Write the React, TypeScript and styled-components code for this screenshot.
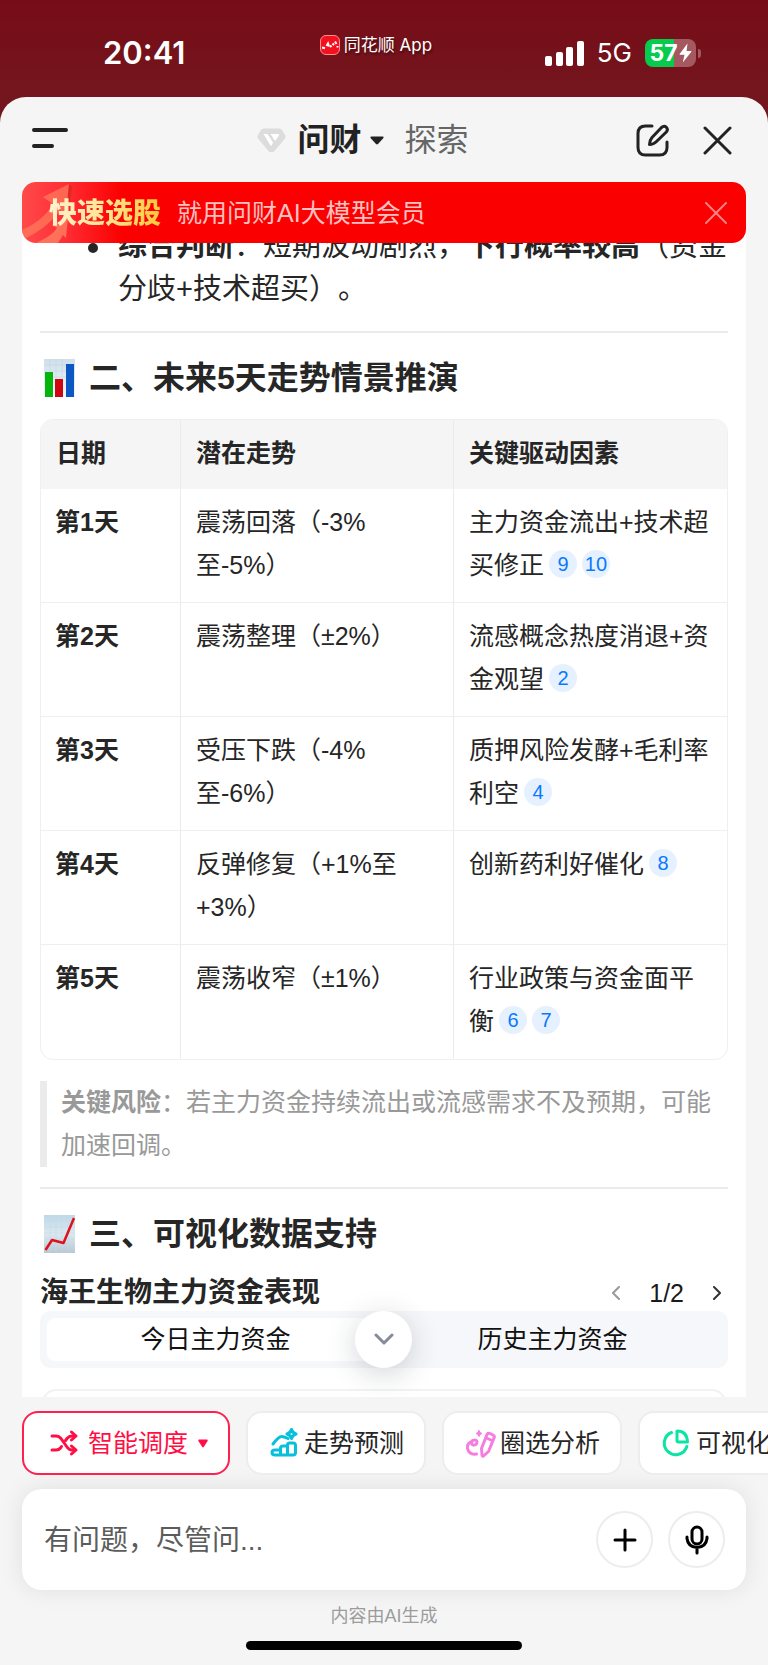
import React from "react";
import styled, { createGlobalStyle, css } from "styled-components";

const GlobalStyle = createGlobalStyle`
  *, *::before, *::after { box-sizing: border-box; }
  html, body { margin: 0; padding: 0; }
  body {
    background: #f5f5f5;
    color: #262626;
    font-family: "Liberation Sans", "Noto Sans CJK SC", sans-serif;
    font-size: 25px;
    line-height: 43px;
    text-spacing-trim: space-all;
  }
  button, input { font: inherit; color: inherit; }
  button { padding: 0; border: 0; background: none; cursor: pointer; }
  h2, h3, p, ul, blockquote { margin: 0; padding: 0; }
  svg { display: block; flex: none; }
`;

const Shell = styled.div`
  display: flex;
  flex-direction: column;
  height: 100vh;
  background: linear-gradient(#760c17 0, #74161d 97px, #74161d 130px);
  overflow: hidden;
`;

/* ---------- status bar ---------- */

const StatusBar = styled.header`
  display: grid;
  grid-template-columns: 1fr auto 1fr;
  align-items: start;
  flex: none;
  height: 97px;
  padding: 0 67px 0 103px;
  color: #fff;
  font-family: Inter, "Noto Sans CJK SC", sans-serif;
`;

const Clock = styled.time`
  margin-top: 33px;
  font-size: 31px;
  font-weight: 600;
  line-height: 40px;
`;

const AppLabel = styled.div`
  display: flex;
  align-items: center;
  gap: 4px;
  margin: 33px 52px 0 0;
  font-size: 17px;
  line-height: 24px;
  text-shadow: 1px 2px 2px rgba(0, 0, 0, 0.4);
`;

const Signals = styled.div`
  display: flex;
  align-items: center;
  justify-content: flex-end;
  gap: 13px;
  margin-top: 37px;
  font-size: 26px;
  line-height: 32px;
`;

const Battery = styled.div`
  display: flex;
  align-items: center;
  gap: 2px;
`;

const BatteryBody = styled.div`
  display: flex;
  align-items: center;
  justify-content: center;
  gap: 1px;
  width: 51px;
  height: 28px;
  border-radius: 8px;
  background: linear-gradient(90deg, #06cb4c 57%, #a4585f 57%);
  font-size: 23px;
  font-weight: 700;
  line-height: 28px;
`;

const BatteryTip = styled.div`
  width: 3px;
  height: 9px;
  border-radius: 0 4px 4px 0;
  background: #a4585f;
`;

/* ---------- sheet and navigation ---------- */

const Sheet = styled.div`
  display: flex;
  flex: 1;
  flex-direction: column;
  min-height: 0;
  border-radius: 26px 26px 0 0;
  background: #f5f5f5;
`;

const NavBar = styled.nav`
  display: grid;
  grid-template-columns: 1fr auto 1fr;
  align-items: center;
  flex: none;
  height: 85px;
  padding: 2px 36px 0 32px;
`;

const NavTabs = styled.div`
  display: flex;
  align-items: center;
  margin-right: 38px;
`;

const NavTab = styled.button<{ $active?: boolean }>`
  display: flex;
  align-items: center;
  gap: 8px;
  margin-left: ${(p) => (p.$active ? 11 : 21)}px;
  color: ${(p) => (p.$active ? "#222" : "#666")};
  font-size: 32px;
  font-weight: ${(p) => (p.$active ? 700 : 400)};
`;

const NavActions = styled.div`
  display: flex;
  align-items: center;
  justify-content: flex-end;
  gap: 34px;
`;

/* ---------- promotion banner ---------- */

const Banner = styled.aside`
  position: relative;
  z-index: 1;
  display: flex;
  align-items: center;
  flex: none;
  height: 61px;
  margin: 0 22px -18px;
  padding: 1px 19px 0 27px;
  border-radius: 14px;
  background: linear-gradient(90deg, #ff4a4a 0, #ff3038 40px, #fb0000 100px);
  overflow: hidden;
`;

const BannerArt = styled.svg`
  position: absolute;
  left: 0;
  top: 0;
`;

const BannerTitle = styled.strong`
  position: relative;
  background: linear-gradient(90deg, #fff3cf, #ffe28a 55%, #ffc83a);
  background-clip: text;
  color: transparent;
  font-size: 28px;
  font-weight: 900;
`;

const BannerText = styled.span`
  flex: 1;
  margin-left: 16px;
  color: #ffc0c0;
`;

/* ---------- answer ---------- */

const Viewport = styled.main`
  position: relative;
  flex: 1;
  min-height: 0;
  margin: 0 22px;
`;

const Article = styled.article`
  height: 100%;
  padding: 0 18px;
  background: #fff;
  overflow: hidden;
`;

const Bullets = styled.ul`
  padding-left: 78px;
  margin-right: -2px;
  font-size: 29px;
  list-style: none;
`;

const Bullet = styled.li`
  position: relative;

  &::before {
    content: "";
    position: absolute;
    left: -30px;
    top: 18px;
    width: 10px;
    height: 10px;
    border-radius: 50%;
    background: #262626;
  }
`;

const Rule = styled.hr`
  height: 2px;
  margin: 20px 0 23px;
  border: 0;
  background: #ebebeb;
`;

const Heading = styled.h2`
  display: flex;
  align-items: center;
  gap: 13px;
  margin-bottom: 19px;
  padding-left: 3px;
  font-size: 32px;
  line-height: 44px;
`;

const TableFrame = styled.div`
  border: 1px solid #f0f0f0;
  border-radius: 13px;
  overflow: hidden;
`;

const Table = styled.table`
  width: 100%;
  border-spacing: 0;
  table-layout: fixed;
`;

const cell = css`
  padding: 12px 14px 15px 15px;
  border-bottom: 1px solid #efefef;
  text-align: left;
  vertical-align: top;

  &:not(:last-child) {
    border-right: 1px solid #ebebeb;
  }
`;

const HeadCell = styled.th<{ $width: string }>`
  ${cell}
  width: ${(p) => p.$width};
  padding-bottom: 13px;
  background: #f5f5f5;
  border-bottom-color: #f5f5f5;
`;

const RowHead = styled.th`
  ${cell}
  padding-left: 14px;
  tr:last-child > & { border-bottom-color: transparent; }
`;

const Cell = styled.td`
  ${cell}
  tr:last-child > & { border-bottom-color: transparent; }
`;

const Cite = styled.a`
  display: inline-flex;
  align-items: center;
  justify-content: center;
  width: 28px;
  height: 28px;
  margin-left: 5px;
  border-radius: 50%;
  background: #e6f1ff;
  color: #0a78ff;
  font-size: 20px;
  line-height: 28px;
  text-decoration: none;
  vertical-align: 3px;
`;

const Quote = styled.blockquote`
  margin-top: 21px;
  padding-left: 14px;
  border-left: 7px solid #ebebeb;
  color: #999;
`;

const CardHead = styled.div`
  display: flex;
  align-items: center;
  justify-content: space-between;
`;

const CardTitle = styled.h3`
  font-size: 28px;
  line-height: 36px;
`;

const Pager = styled.div`
  display: flex;
  align-items: center;
  gap: 28px;
  margin-right: 6px;
  color: #1a1a1a;
  line-height: 34px;
`;

const Segments = styled.div`
  display: flex;
  padding: 7px;
  border-radius: 11px;
  background: #f6f7fa;
`;

const Segment = styled.button<{ $active?: boolean }>`
  flex: 1;
  border-radius: 8px;
  background: ${(p) => (p.$active ? "#fff" : "transparent")};
  color: #111;
`;

const ChartCard = styled.section`
  height: 300px;
  margin: 21px 2px 0;
  border: 2px solid #f2f2f2;
  border-radius: 14px;
`;

const ScrollDown = styled.button`
  position: absolute;
  left: 50%;
  bottom: 29px;
  display: flex;
  align-items: center;
  justify-content: center;
  width: 57px;
  height: 57px;
  margin-left: -29px;
  border-radius: 50%;
  background: #fff;
  box-shadow: 0 6px 30px rgba(30, 40, 60, 0.2);
`;

/* ---------- dock ---------- */

const Dock = styled.footer`
  flex: none;
  overflow: hidden;
`;

const Chips = styled.div`
  display: flex;
  gap: 16px;
  padding: 14px 0 14px 22px;
  overflow: hidden;
`;

const Chip = styled.button<{ $active?: boolean }>`
  display: flex;
  align-items: center;
  flex: none;
  gap: ${(p) => (p.$active ? 10 : 4)}px;
  height: 64px;
  padding: 0 ${(p) => (p.$active ? 20 : 20)}px 0 ${(p) => (p.$active ? 26 : 22)}px;
  border: 2px solid ${(p) => (p.$active ? "#ff1f50" : "#ededed")};
  border-radius: 16px;
  background: #fff;
  color: ${(p) => (p.$active ? "#ff0f45" : "#262626")};
`;

const Composer = styled.form`
  display: flex;
  align-items: center;
  gap: 15px;
  height: 101px;
  margin: 0 22px;
  padding: 0 21px 0 22px;
  border-radius: 20px;
  background: #fff;
  box-shadow: 0 0 24px rgba(0, 0, 0, 0.09);
`;

const Prompt = styled.input`
  flex: 1;
  min-width: 0;
  padding: 2px 0 0;
  border: 0;
  outline: 0;
  background: none;
  font-size: 28px;

  &::placeholder {
    color: #5c5c5c;
    opacity: 1;
  }
`;

const RoundButton = styled.button`
  display: flex;
  align-items: center;
  justify-content: center;
  width: 57px;
  height: 57px;
  border: 2px solid #ededed;
  border-radius: 50%;
`;

const Notice = styled.p`
  margin-top: 13px;
  color: #9c9c9c;
  font-size: 18px;
  line-height: 26px;
  text-align: center;
`;

const HomeIndicator = styled.div`
  width: 36%;
  height: 9px;
  margin: 12px auto 15px;
  border-radius: 5px;
  background: #000;
`;

/* ---------- drawings ---------- */

type StrokeProps = {
  w: number;
  h: number;
  color?: string;
  width?: number;
  children: React.ReactNode;
};

const Stroke = ({ w, h, color = "currentColor", width = 3, children }: StrokeProps) => (
  <svg
    width={w}
    height={h}
    viewBox={`0 0 ${w} ${h}`}
    fill="none"
    stroke={color}
    strokeWidth={width}
    strokeLinecap="round"
    strokeLinejoin="round"
    aria-hidden="true"
  >
    {children}
  </svg>
);

const AppLogo = () => (
  <svg width="20" height="20" viewBox="0 0 20 20" aria-hidden="true">
    <rect x="0.5" y="0.5" width="19" height="19" rx="5.5" fill="#f5101f" stroke="#ff8d8f" />
    <path d="M2 12.500l3 .8M6.500 11l1.500-2.500 1 3M10 10.500l1.500 1.500M12.500 10l1.500-1.500M15 6.500l1.500 2.500M17.500 11v1.500" fill="none" stroke="#fff" strokeWidth="2" />
  </svg>
);

const SignalBars = () => (
  <svg width="39" height="25" viewBox="0 0 39 25" fill="#fff" aria-hidden="true">
    <rect x="0" y="15" width="7" height="10" rx="2" />
    <rect x="11" y="11" width="7" height="14" rx="2" />
    <rect x="21" y="6" width="7" height="19" rx="2" />
    <rect x="32" y="0" width="7" height="25" rx="2" />
  </svg>
);

const Bolt = () => (
  <svg width="13" height="20" viewBox="0 0 13 20" fill="#fff" aria-hidden="true">
    <path d="M8.500 0.500L0.800 10.800c-.4.500 0 1 .5 1H5.500L3.800 19.500 12.200 9c.4-.5.100-1-.5-1H7.600z" />
  </svg>
);

const MenuIcon = () => (
  <Stroke w={36} h={21} color="#222" width={4}>
    <path d="M2 2H34M2 18H20" />
  </Stroke>
);

const VipIcon = () => (
  <svg width="29" height="25" viewBox="0 0 29 25" aria-hidden="true">
    <path
      d="M7 0.500H22Q24 0.500 25 2L28 7Q29 9 28 10.500L17.500 23Q14.500 25.500 11.500 23L1 10.500Q0 9 1 7L4 2Q5 0.500 7 0.500z"
      fill="#dcdcdc"
    />
    <path d="M6.500 6H10.500L16 14.500 14.500 17.500Q14 18 13.500 17.500z" fill="#fff" />
    <path d="M13.500 6H21.500Q22.500 6.500 22 7.500L18 13z" fill="#fff" />
  </svg>
);

const Caret = ({ w, h }: { w: number; h: number }) => (
  <svg width={w} height={h} viewBox="0 0 14 9" preserveAspectRatio="none" fill="currentColor" aria-hidden="true">
    <path d="M1.500 0.500H12.500Q14.500 0.800 13 2.500L8 8Q7 8.800 6 8L1 2.500Q-0.500 0.800 1.500 0.500z" />
  </svg>
);

const ComposeIcon = () => (
  <Stroke w={33} h={33} color="#222">
    <path d="M16 2H9.500Q2 2 2 9.500V23.500Q2 31 9.500 31H23.500Q31 31 31 23.500V18" />
    <path d="M13.500 20.500Q13.500 16.500 16 13.500L25.500 3.500Q28 1.300 30.300 3.200 32.500 5.500 30.300 8L20.500 17.500Q17.500 20.500 13.500 20.500z" />
  </Stroke>
);

const CloseIcon = () => (
  <Stroke w={29} h={29} color="#222">
    <path d="M2 2L27 27M27 2L2 27" />
  </Stroke>
);

const BarChartEmoji = () => (
  <svg width="33" height="38" viewBox="0 0 33 38" role="img" aria-label="柱状图">
    <defs>
      <linearGradient id="paper" x1="0" y1="0" x2="0" y2="1">
        <stop offset="0" stopColor="#cfdfea" />
        <stop offset="1" stopColor="#f4f8fb" />
      </linearGradient>
    </defs>
    <rect x="1" y="0" width="31" height="38" fill="url(#paper)" />
    <path d="M1 6H32M1 12H32M1 18H32M7 0V38M13 0V38M19 0V38" stroke="#bdd3e2" strokeWidth="0.500" />
    <rect x="2" y="13" width="8" height="25" fill="#06b50b" />
    <rect x="12" y="20" width="8" height="18" fill="#cf0610" />
    <rect x="23" y="5" width="8" height="33" fill="#0b57c4" />
  </svg>
);

const TrendEmoji = () => (
  <svg width="33" height="38" viewBox="0 0 33 38" role="img" aria-label="上升趋势图">
    <defs>
      <linearGradient id="sky" x1="0" y1="0" x2="0" y2="1">
        <stop offset="0" stopColor="#bfd8e8" />
        <stop offset="0.500" stopColor="#dbe8f0" />
        <stop offset="1" stopColor="#b9c8d2" />
      </linearGradient>
    </defs>
    <rect x="1" y="0" width="31" height="38" fill="url(#sky)" />
    <path d="M1 6H32M1 12H32M1 18H32M1 24H32M1 30H32M7 0V38M13 0V38M19 0V38M25 0V38" stroke="#c3d8e5" strokeWidth="0.500" />
    <path d="M2.500 35L9 25 20.500 28 31 3" fill="none" stroke="#e0101c" strokeWidth="2.500" strokeLinejoin="round" />
  </svg>
);

const ShuffleIcon = () => (
  <Stroke w={28} h={26} width={3}>
    <path d="M2 6H6Q9 6 11 8.500L17 17Q19 20 22 20H25" />
    <path d="M2 20H6Q9 20 10.500 18L11.500 16.500M15.500 10.500L17 8.500Q19 6 22 6H25" />
    <path d="M21.500 2L26 6 21.500 10M21.500 16L26 20 21.500 24" />
  </Stroke>
);

const ForecastIcon = () => (
  <Stroke w={30} h={30} color="#08c0dc">
    <path d="M3 16Q9 8 12 8.500T18 10.500" />
    <path d="M21.500 1.500Q22.500 5 26 6 22.500 7 21.500 10.500 20.500 7 17 6 20.500 5 21.500 1.500z" />
    <path d="M5 22H10.500V27H5Q2 27 2 24.500T5 22zM10.500 20.500Q10.500 18 13 18H17.500V27H10.500zM17.500 17Q17.500 15 19.500 15H23Q25.500 15 25.500 17.500V24.500Q25.500 27 23 27H17.500z" />
  </Stroke>
);

const CircleSelectIcon = () => (
  <Stroke w={30} h={30} color="#f57de0">
    <path d="M5.500 13.500Q9.500 10.500 11 13.500 11 17.500 7 17 4.500 16 6.500 12.500M5.500 13.500Q0.500 16 1.500 20.500 3 27 10.500 26" />
    <path d="M15.500 20.500L21 6.500Q22 4.500 24 5.500L27 7Q29 8 28 10L22.500 23.500 17.500 28Q16 28.500 16 27zM20.500 10L26 12.500" />
    <path d="M13 2.500L14 4.500 16 5.500 14 6.500 13 8.500 12 6.500 10 5.500 12 4.500z" fill="#f57de0" strokeWidth="1" />
  </Stroke>
);

const PieIcon = () => (
  <Stroke w={30} h={30} color="#0de4a4">
    <path d="M9.500 4.500A11.500 11.500 0 1 0 24.800 18.500" />
    <path d="M15 3Q25 3 25.500 14H16.500Q15 14 15 12.500z" />
  </Stroke>
);

const Chevron = ({ d, color }: { d: string; color: string }) => (
  <Stroke w={10} h={14} color={color} width={2}>
    <path d={d} />
  </Stroke>
);

/* ---------- content ---------- */

type Forecast = { day: string; trend: string[]; driver: string; cites: number[] };

const forecasts: Forecast[] = [
  { day: "第1天", trend: ["震荡回落（-3%", "至-5%）"], driver: "主力资金流出+技术超买修正", cites: [9, 10] },
  { day: "第2天", trend: ["震荡整理（±2%）"], driver: "流感概念热度消退+资金观望", cites: [2] },
  { day: "第3天", trend: ["受压下跌（-4%", "至-6%）"], driver: "质押风险发酵+毛利率利空", cites: [4] },
  { day: "第4天", trend: ["反弹修复（+1%至", "+3%）"], driver: "创新药利好催化", cites: [8] },
  { day: "第5天", trend: ["震荡收窄（±1%）"], driver: "行业政策与资金面平衡", cites: [6, 7] },
];

const ForecastTable = () => (
  <TableFrame>
    <Table>
      <thead>
        <tr>
          <HeadCell scope="col" $width="20.400%">日期</HeadCell>
          <HeadCell scope="col" $width="39.800%">潜在走势</HeadCell>
          <HeadCell scope="col" $width="39.800%">关键驱动因素</HeadCell>
        </tr>
      </thead>
      <tbody>
        {forecasts.map((f) => (
          <tr key={f.day}>
            <RowHead scope="row">{f.day}</RowHead>
            <Cell>
              {f.trend.map((line, i) => (
                <React.Fragment key={line}>
                  {i > 0 && <br />}
                  {line}
                </React.Fragment>
              ))}
            </Cell>
            <Cell>
              {f.driver}
              {f.cites.map((n) => (
                <Cite key={n} href={`#ref-${n}`}>{n}</Cite>
              ))}
            </Cell>
          </tr>
        ))}
      </tbody>
    </Table>
  </TableFrame>
);

export default function App() {
  return (
    <Shell>
      <GlobalStyle />
      <StatusBar>
        <Clock>20:41</Clock>
        <AppLabel>
          <AppLogo />
          同花顺 App
        </AppLabel>
        <Signals>
          <SignalBars />
          <span>5G</span>
          <Battery>
            <BatteryBody>
              57
              <Bolt />
            </BatteryBody>
            <BatteryTip />
          </Battery>
        </Signals>
      </StatusBar>

      <Sheet>
        <NavBar>
          <div>
            <button type="button" aria-label="菜单"><MenuIcon /></button>
          </div>
          <NavTabs>
            <VipIcon />
            <NavTab type="button" $active>
              问财
              <Caret w={14} h={9} />
            </NavTab>
            <NavTab type="button">探索</NavTab>
          </NavTabs>
          <NavActions>
            <button type="button" aria-label="新对话"><ComposeIcon /></button>
            <button type="button" aria-label="关闭"><CloseIcon /></button>
          </NavActions>
        </NavBar>

        <Banner>
          <BannerArt width="70" height="61" viewBox="0 0 70 61" aria-hidden="true">
            <path d="M0 48Q22 38 31 22L21 15 47 2 44 34 38 28Q26 46 0 58z" fill="#ff7a5c" opacity="0.750" />
            <path d="M47 2L50 5 46 36 44 34z" fill="#c8281c" opacity="0.600" />
            <path d="M14 61Q30 54 35 46L30 43 46 36 44 56 41 53 36 61z" fill="#ff8a66" opacity="0.700" />
          </BannerArt>
          <BannerTitle>快速选股</BannerTitle>
          <BannerText>就用问财AI大模型会员</BannerText>
          <button type="button" aria-label="关闭横幅">
            <Stroke w={22} h={22} color="#ff8080" width={2}>
              <path d="M1 1L21 21M21 1L1 21" />
            </Stroke>
          </button>
        </Banner>

        <Viewport>
          <Article>
            <Bullets>
              <Bullet>
                <strong>综合判断</strong>：短期波动剧烈，<strong>下行概率较高</strong>（资金分歧+技术超买）。
              </Bullet>
            </Bullets>
            <Rule />
            <Heading>
              <BarChartEmoji />
              二、未来5天走势情景推演
            </Heading>
            <ForecastTable />
            <Quote>
              <strong>关键风险</strong>：若主力资金持续流出或流感需求不及预期，可能加速回调。
            </Quote>
            <Rule />
            <Heading>
              <TrendEmoji />
              三、可视化数据支持
            </Heading>
            <CardHead>
              <CardTitle>海王生物主力资金表现</CardTitle>
              <Pager>
                <button type="button" aria-label="上一页">
                  <Chevron color="#999" d="M8 1L2 7 8 13" />
                </button>
                <span>1/2</span>
                <button type="button" aria-label="下一页">
                  <Chevron color="#333" d="M2 1L8 7 2 13" />
                </button>
              </Pager>
            </CardHead>
            <Segments>
              <Segment type="button" $active>今日主力资金</Segment>
              <Segment type="button">历史主力资金</Segment>
            </Segments>
            <ChartCard />
          </Article>
          <ScrollDown type="button" aria-label="滚动到底部">
            <Stroke w={20} h={13} color="#85899a">
              <path d="M2 2L10 10 18 2" />
            </Stroke>
          </ScrollDown>
        </Viewport>

        <Dock>
          <Chips>
            <Chip type="button" $active>
              <ShuffleIcon />
              智能调度
              <Caret w={10} h={9} />
            </Chip>
            <Chip type="button"><ForecastIcon />走势预测</Chip>
            <Chip type="button"><CircleSelectIcon />圈选分析</Chip>
            <Chip type="button"><PieIcon />可视化</Chip>
          </Chips>
          <Composer onSubmit={(e) => e.preventDefault()}>
            <Prompt type="text" aria-label="提问" placeholder="有问题，尽管问..." />
            <RoundButton type="button" aria-label="添加">
              <Stroke w={24} h={24} color="#000">
                <path d="M12 2V22M2 12H22" />
              </Stroke>
            </RoundButton>
            <RoundButton type="button" aria-label="语音输入">
              <Stroke w={24} h={30} color="#000">
                <rect x="7" y="2" width="10" height="17" rx="5" />
                <path d="M2 12V13.500Q3 22 12 22.500 21 22 22 13.500V12M12 23V28" />
              </Stroke>
            </RoundButton>
          </Composer>
          <Notice>内容由AI生成</Notice>
          <HomeIndicator />
        </Dock>
      </Sheet>
    </Shell>
  );
}
